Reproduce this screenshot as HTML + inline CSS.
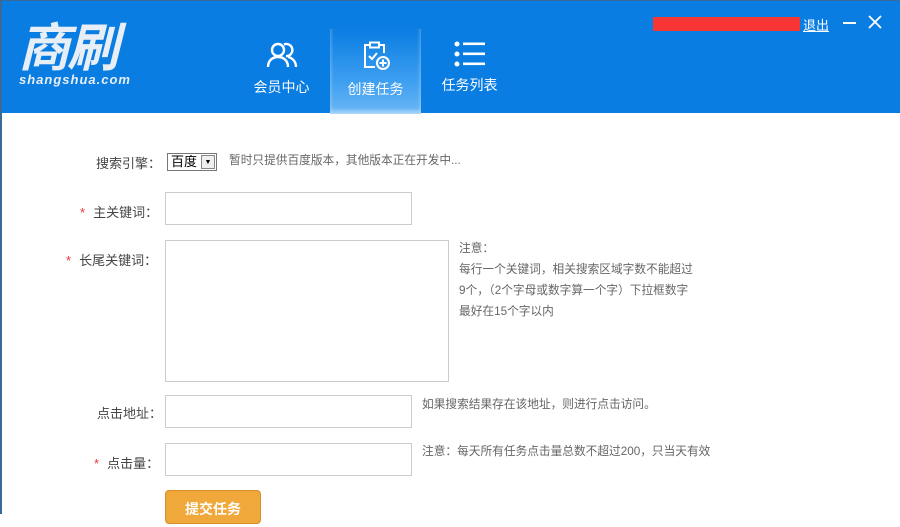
<!DOCTYPE html>
<html><head><meta charset="utf-8"><style>
*{margin:0;padding:0;box-sizing:border-box}
body{width:900px;height:514px;overflow:hidden;background:#fff;font-family:"Liberation Sans","Noto Sans CJK SC",sans-serif;position:relative}
.bl{position:absolute;left:0;top:0;width:2px;height:514px;background:#3a6a9a}
.hd{position:absolute;left:0;top:0;width:900px;height:113px;background:#0a7de2;border-top:1px solid #3a6a9a}
.logo{position:absolute;left:18px;top:20px;color:#e8eef5;font-size:52px;font-weight:bold;font-style:italic;letter-spacing:-3px;line-height:56px}
.logo2{position:absolute;left:19px;top:71px;color:#e8eef5;font-size:13px;font-weight:bold;font-style:italic;letter-spacing:1px}
.tab{position:absolute;top:28px;width:91px;height:85px;color:#fff;text-align:center;font-size:14px}
.tab svg{display:block;margin:12px auto 8px}
.act{background:linear-gradient(#0a7de2,#3c9ef0 60%,#6ab6f5);box-shadow:inset 0 -3px 4px rgba(255,255,255,.5)}
.red{position:absolute;left:653px;top:16px;width:147px;height:14px;background:#f73535}
.out{position:absolute;left:803px;top:14px;color:#fff;font-size:13px;text-decoration:underline}
.lbl{position:absolute;font-size:13px;color:#444;text-align:right}
.star{color:#e33;margin-right:8px}
.inp{position:absolute;border:1px solid #ccc;background:#fff}
.tip{position:absolute;font-size:11.7px;color:#666;line-height:21px}
</style></head><body>
<div class="hd">
<div class="logo">商刷</div>
<div class="logo2">shangshua.com</div>
<div class="tab" style="left:236px"><svg width="32" height="28" viewBox="0 0 32 28" fill="none" stroke="#fff" stroke-width="2.4"><circle cx="12" cy="9" r="6"/><path d="M2 26c0-6 4-10 10-10s10 4 10 10"/><path d="M18 3.5a6 6 0 1 1 2 11.5M22 16c5 1 8 5 8 10"/></svg>会员中心</div>
<div class="tab act" style="left:330px"><svg width="30" height="30" viewBox="0 0 30 30" fill="none" stroke="#fff" stroke-width="2"><path d="M9 4H4v22h10M18 4h5v8"/><rect x="9" y="1.5" width="9" height="5"/><path d="M8 15l3 3 5-6"/><circle cx="22" cy="22" r="6"/><path d="M22 18.5v7M18.5 22h7"/></svg>创建任务</div>
<div class="tab" style="left:424px"><svg width="32" height="26" viewBox="0 0 32 26" fill="#fff"><circle cx="3" cy="3" r="2.5"/><circle cx="3" cy="13" r="2.5"/><circle cx="3" cy="23" r="2.5"/><rect x="9" y="1.5" width="22" height="2.6"/><rect x="9" y="11.5" width="22" height="2.6"/><rect x="9" y="21.5" width="22" height="2.6"/></svg>任务列表</div>
<div class="red"></div><div class="out">退出</div>
<div style="position:absolute;left:843px;top:21px;width:13px;height:2px;background:#fff"></div>
<svg style="position:absolute;left:868px;top:14px" width="14" height="14" stroke="#fff" stroke-width="1.8"><path d="M1 1l12 12M13 1L1 13"/></svg>
</div>
<div class="bl"></div>
<div class="lbl" style="left:96px;top:153px">搜索引擎：</div>
<div style="position:absolute;left:167px;top:153px;width:50px;height:18px;border:1px solid #777;font-size:13px;padding-left:3px;line-height:16px;color:#000">百度<span style="position:absolute;right:1px;top:1px;width:14px;height:14px;border:1px solid #888;background:#eee;font-size:7px;text-align:center;line-height:13px">▼</span></div>
<div class="tip" style="left:229px;top:150px">暂时只提供百度版本，其他版本正在开发中...</div>
<div class="lbl" style="left:80px;top:202px"><span class="star">*</span>主关键词：</div>
<div class="inp" style="left:165px;top:192px;width:247px;height:33px"></div>
<div class="lbl" style="left:66px;top:250px"><span class="star">*</span>长尾关键词：</div>
<div class="inp" style="left:165px;top:240px;width:284px;height:142px"></div>
<div class="tip" style="left:459px;top:238px">注意：<br>每行一个关键词，相关搜索区域字数不能超过<br>9个，（2个字母或数字算一个字）下拉框数字<br>最好在15个字以内</div>
<div class="lbl" style="left:97px;top:403px">点击地址：</div>
<div class="inp" style="left:165px;top:395px;width:247px;height:33px"></div>
<div class="tip" style="left:422px;top:394px">如果搜索结果存在该地址，则进行点击访问。</div>
<div class="lbl" style="left:94px;top:453px"><span class="star">*</span>点击量：</div>
<div class="inp" style="left:165px;top:443px;width:247px;height:33px"></div>
<div class="tip" style="left:422px;top:441px">注意：每天所有任务点击量总数不超过200，只当天有效</div>
<div style="position:absolute;left:165px;top:490px;width:96px;height:34px;background:#f0a83a;border:1px solid #d9902a;border-radius:4px;color:#fff;font-size:14px;font-weight:bold;text-align:center;line-height:36px">提交任务</div>
</body></html>
